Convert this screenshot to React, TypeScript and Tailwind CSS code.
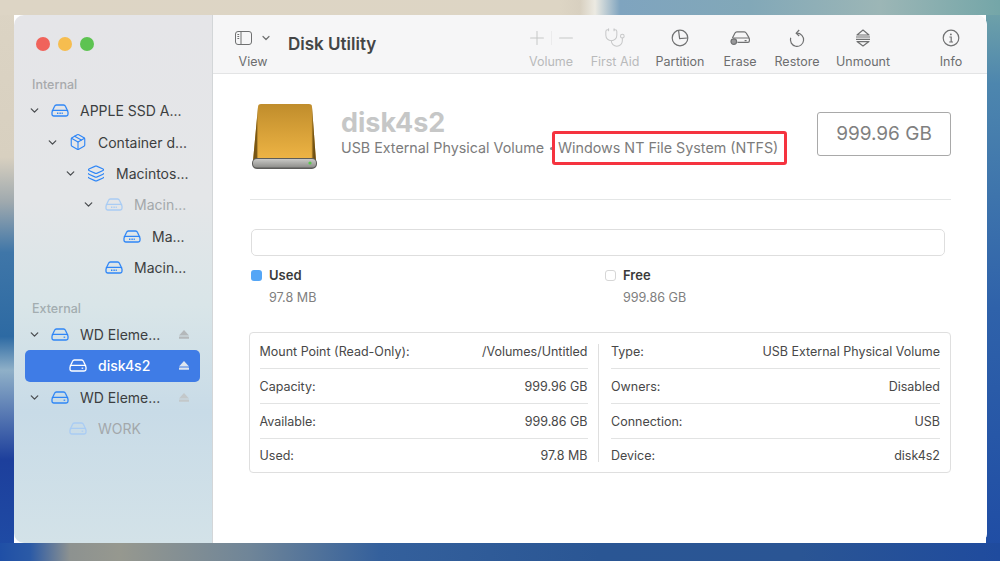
import { ChevronDown, Layers, Plus, Minus, Stethoscope, Package } from "lucide-react";

const font = "font-['Inter','Liberation_Sans',sans-serif]";

const DriveIcon = ({ className = "text-[#2f86f6]" }: { className?: string }) => (
  <svg width="18" height="13" viewBox="0 0 18 13" fill="none" stroke="currentColor" strokeWidth="1.3" className={className}>
    <path d="M1.2 7.2 3.6 2.2C4 1.3 4.6 1 5.4 1h7.2c.8 0 1.4.3 1.8 1.2l2.4 5" />
    <rect x="1" y="6.4" width="16" height="5.6" rx="1.8" />
    <path d="M12.6 9.2h1.6" strokeWidth="1.2" />
  </svg>
);

const SsdIcon = ({ className = "text-[#2f86f6]" }: { className?: string }) => (
  <svg width="18" height="13" viewBox="0 0 18 13" fill="none" stroke="currentColor" strokeWidth="1.3" className={className}>
    <path d="M1.2 7.2 3.6 2.2C4 1.3 4.6 1 5.4 1h7.2c.8 0 1.4.3 1.8 1.2l2.4 5" />
    <rect x="1" y="6.4" width="16" height="5.6" rx="1.8" />
    <path d="M6 9.2h6" strokeWidth="1.6" strokeDasharray="1 .6" />
  </svg>
);

const Eject = ({ className }: { className: string }) => (
  <svg width="10" height="9" viewBox="0 0 10 9" fill="currentColor" className={className}>
    <path d="M5 0 10 5.4H0Z" />
    <rect x="0" y="6.6" width="10" height="2.2" rx=".4" />
  </svg>
);

type Row = {
  label: string;
  pl: string;
  chevron?: boolean;
  icon: "ssd" | "drive" | "box" | "layers";
  dim?: boolean;
  eject?: string;
  selected?: boolean;
};

const internal: Row[] = [
  { label: "APPLE SSD A...", pl: "pl-[3px]", chevron: true, icon: "ssd" },
  { label: "Container d...", pl: "pl-[21px]", chevron: true, icon: "box" },
  { label: "Macintos...", pl: "pl-[39px]", chevron: true, icon: "layers" },
  { label: "Macin...", pl: "pl-[57px]", chevron: true, icon: "ssd", dim: true },
  { label: "Ma...", pl: "pl-[75px]", icon: "ssd" },
  { label: "Macin...", pl: "pl-[57px]", icon: "ssd" },
];

const external: Row[] = [
  { label: "WD Eleme...", pl: "pl-[3px]", chevron: true, icon: "drive", eject: "text-[#b4b8ba]" },
  { label: "disk4s2", pl: "pl-[21px]", icon: "drive", selected: true, eject: "text-[#dfe6ef]" },
  { label: "WD Eleme...", pl: "pl-[3px]", chevron: true, icon: "drive", eject: "text-[#c3c8ca]" },
  { label: "WORK", pl: "pl-[21px]", icon: "drive", dim: true },
];

const SidebarRow = ({ row }: { row: Row }) => {
  const tint = row.selected ? "text-white" : row.dim ? "text-[#a9ccf4]" : "text-[#2f86f6]";
  return (
    <div
      className={`flex h-[31.4px] items-center rounded-[5px] pr-[11px] ${row.pl} ${
        row.selected ? "bg-[#3f7ce6]" : ""
      }`}
    >
      <div className="w-[12px] shrink-0 text-[#4a4d50]">
        {row.chevron && <ChevronDown size={13} strokeWidth={2.4} />}
      </div>
      <div className="ml-[11px] flex w-[18px] shrink-0 justify-center">
        {row.icon === "ssd" && <SsdIcon className={tint} />}
        {row.icon === "drive" && <DriveIcon className={tint} />}
        {row.icon === "box" && <Package size={18} strokeWidth={1.5} className={tint} />}
        {row.icon === "layers" && <Layers size={19} strokeWidth={1.5} className={tint} />}
      </div>
      <span
        className={`ml-[11px] flex-1 whitespace-nowrap text-[14px] ${
          row.selected ? "font-medium text-white" : row.dim ? "text-[#a3a8ab]" : "text-[#3c3e40]"
        }`}
      >
        {row.label}
      </span>
      {row.eject && <Eject className={row.eject} />}
    </div>
  );
};

const Sidebar = () => (
  <aside className="flex w-[199px] shrink-0 flex-col border-r border-[#d3d6d8] bg-[linear-gradient(180deg,#e5e5e8_0%,#e4e6e8_35%,#d9e5e8_55%,#c8dbe7_75%,#d3e2e8_100%)] pl-[11px] pr-[12px]">
    <div className="flex gap-[8px] pl-[11px] pt-[22px]">
      <div className="h-[14px] w-[14px] rounded-full bg-[#f0635b]" />
      <div className="h-[14px] w-[14px] rounded-full bg-[#f6bd4f]" />
      <div className="h-[14px] w-[14px] rounded-full bg-[#5dc351]" />
    </div>
    <div className="mt-[26px] pl-[7px] text-[12.5px] font-medium leading-[16px] text-[#a8aaac]">Internal</div>
    <div className="mt-[2px] flex flex-col">
      {internal.map((row, i) => (
        <SidebarRow key={i} row={row} />
      ))}
    </div>
    <div className="mt-[18px] pl-[7px] text-[12.5px] font-medium leading-[16px] text-[#a3adb0]">External</div>
    <div className="mt-[1.5px] flex flex-col">
      {external.map((row, i) => (
        <SidebarRow key={i} row={row} />
      ))}
    </div>
  </aside>
);

const PieIcon = () => (
  <svg width="18" height="18" viewBox="0 0 18 18" fill="none" stroke="currentColor" strokeWidth="1.2">
    <circle cx="9" cy="9" r="7.8" />
    <path d="M7.6 1.6 8.6 9.6 16.6 9" />
  </svg>
);

const EraseIcon = () => (
  <svg width="21" height="16" viewBox="0 0 21 16" fill="none" stroke="currentColor" strokeWidth="1.2">
    <path d="M2.4 8 5 3c.4-.8 1-1.2 1.9-1.2h7.4c.9 0 1.5.4 1.9 1.2l2.6 4.4c.5.8.6 1.3.6 2.2v1.2c0 1-.6 1.6-1.6 1.6H7.4" />
    <path d="M3 8h16M14.6 10.6h2" />
    <circle cx="3.8" cy="11.6" r="2.8" fill="currentColor" fillOpacity=".7" />
  </svg>
);

const RestoreIcon = () => (
  <svg width="18" height="19" viewBox="0 0 18 19" fill="none" stroke="currentColor" strokeWidth="1.2">
    <path d="M9 4.2a6.6 6.6 0 1 1-6.3 4.6" />
    <path d="M11.2 1 8.2 4.2l3 2.8" />
  </svg>
);

const UnmountIcon = () => (
  <svg width="16" height="18" viewBox="0 0 16 18" fill="none" stroke="currentColor" strokeWidth="1.2" strokeLinejoin="round">
    <path d="M8 1 14 6H2Z" />
    <path d="M1 8h14M1 10.4h14" />
    <path d="M8 17 14 12.6H2Z" />
  </svg>
);

const InfoIcon = () => (
  <svg width="18" height="18" viewBox="0 0 18 18" fill="none" stroke="currentColor" strokeWidth="1.2">
    <circle cx="9" cy="9" r="7.8" />
    <path d="M7.4 8h1.8v5M7.2 13h3.8" />
    <circle cx="8.9" cy="5.4" r=".9" fill="currentColor" stroke="none" />
  </svg>
);

const SidebarToggleIcon = () => (
  <svg width="17" height="14" viewBox="0 0 17 14" fill="none" stroke="currentColor" strokeWidth="1">
    <rect x=".5" y=".5" width="16" height="13" rx="2.5" />
    <path d="M6 .5v13M2.4 3.5h1.8M2.4 5.5h1.8M2.4 7.5h1.8" />
  </svg>
);

const ToolItem = ({
  label,
  width,
  dim,
  children,
}: {
  label: string;
  width: string;
  dim?: boolean;
  children: React.ReactNode;
}) => (
  <div className={`flex flex-col items-center ${width}`}>
    <div className={`flex h-[20px] items-center ${dim ? "text-[#c6c7c8]" : "text-[#707172]"}`}>{children}</div>
    <div className={`mt-[6px] whitespace-nowrap text-[12.5px] leading-[16px] ${dim ? "text-[#b9babb]" : "text-[#6d6e6f]"}`}>
      {label}
    </div>
  </div>
);

const Toolbar = () => (
  <header className="flex h-[59px] shrink-0 items-start border-b border-[#e3e4e5] bg-[#f6f6f7] pl-[24px] pr-[22px] pt-[13px]">
    <div className="flex w-[32px] flex-col items-center text-[#6f7071]">
      <div className="flex h-[20px] items-center gap-[8px]">
        <SidebarToggleIcon />
        <ChevronDown size={12} strokeWidth={2.4} />
      </div>
      <div className="mt-[6px] text-[12.5px] leading-[16px] text-[#6d6e6f]">View</div>
    </div>
    <div className="ml-[19px] mt-[4px] text-[17px] font-semibold leading-[24px] text-[#444546]">Disk Utility</div>
    <div className="ml-auto flex">
      <ToolItem label="Volume" width="w-[60px]" dim>
        <Plus size={22} strokeWidth={1.1} />
        <div className="mx-[3px] h-[14px] w-px bg-[#ebebec]" />
        <Minus size={22} strokeWidth={1.1} />
      </ToolItem>
      <ToolItem label="First Aid" width="w-[68px]" dim>
        <Stethoscope size={22} strokeWidth={1.1} />
      </ToolItem>
      <ToolItem label="Partition" width="w-[62px]">
        <PieIcon />
      </ToolItem>
      <ToolItem label="Erase" width="w-[58px]">
        <EraseIcon />
      </ToolItem>
      <ToolItem label="Restore" width="w-[56px]">
        <RestoreIcon />
      </ToolItem>
      <ToolItem label="Unmount" width="w-[76px]">
        <UnmountIcon />
      </ToolItem>
      <ToolItem label="Info" width="w-[28px] ml-[36px]">
        <InfoIcon />
      </ToolItem>
    </div>
  </header>
);

const DiskArt = () => (
  <svg width="68" height="68" viewBox="0 0 68 68" className="shrink-0">
    <defs>
      <linearGradient id="gold" x1="0" y1="0" x2="0" y2="1">
        <stop offset="0" stopColor="#c08d2c" />
        <stop offset="1" stopColor="#efb545" />
      </linearGradient>
      <linearGradient id="edge" x1="0" y1="0" x2="1" y2="0">
        <stop offset="0" stopColor="#6f4f12" />
        <stop offset=".06" stopColor="#7d5a16" />
        <stop offset=".09" stopColor="#d9a63e" stopOpacity="0" />
        <stop offset=".92" stopColor="#d9a63e" stopOpacity="0" />
        <stop offset=".95" stopColor="#7d5a16" />
        <stop offset="1" stopColor="#5f4410" />
      </linearGradient>
      <linearGradient id="base" x1="0" y1="0" x2="0" y2="1">
        <stop offset="0" stopColor="#c9c9c6" />
        <stop offset="1" stopColor="#8e8e8b" />
      </linearGradient>
    </defs>
    <path d="M7 4c0-2 1-3 3-3h48c2 0 3 1 3 3l4 54H2Z" fill="url(#gold)" />
    <path d="M7 4c0-2 1-3 3-3h48c2 0 3 1 3 3l4 54H2Z" fill="url(#edge)" />
    <rect x="1" y="55" width="65" height="11" rx="5" fill="#5c5c5a" />
    <rect x="2" y="56" width="63" height="8.5" rx="4" fill="url(#base)" />
    <circle cx="59" cy="60" r="1.6" fill="#58c94e" />
  </svg>
);

const InfoColumn = ({ rows, width }: { rows: [string, string][]; width: string }) => (
  <div className={`flex flex-col ${width}`}>
    {rows.map(([label, value], i) => (
      <div
        key={label}
        className={`flex shrink-0 items-center justify-between pt-[2px] text-[12.5px] text-[#484848] ${
          i < rows.length - 1 ? "h-[35px] border-b-[1.5px] border-[#e2e3e3]" : "h-[32px]"
        }`}
      >
        <span>{label}</span>
        <span>{value}</span>
      </div>
    ))}
  </div>
);

const Details = () => (
  <main className="flex flex-1 flex-col bg-white pl-[37px] pr-[36px] pt-[29px]">
    <div className="flex items-start">
      <div className="ml-[1px] shrink-0">
        <DiskArt />
      </div>
      <div className="ml-[22px] pt-[6px]">
        <div className="text-[27px] font-bold leading-[28px] text-[#c6c7c7]">disk4s2</div>
        <div className="flex items-center whitespace-nowrap text-[14.3px] leading-[22px] text-[#7c7c7c]">
          <span>USB External Physical Volume</span>
          <span className="mx-[5.5px] h-[3px] w-[3px] rounded-full bg-[#8c8c8c]" />
          <span className="relative">
            Windows NT File System (NTFS)
            <span className="absolute -bottom-[6px] -left-[6px] -right-[9px] -top-[6px] rounded-[3px] border-[3.5px] border-[#f5333f]" />
          </span>
        </div>
      </div>
      <div className="ml-auto mt-[9px] flex h-[44px] w-[134px] items-center justify-center rounded-[3px] border border-[#a9a9a9] text-[19px] text-[#808080]">
        999.96 GB
      </div>
    </div>
    <div className="mt-[28px] h-px bg-[#e4e6e6]" />
    <div className="ml-[1px] mr-[6px] mt-[29px] h-[27px] rounded-[5px] border-[1.5px] border-[#dedede]" />
    <div className="ml-[1px] mt-[11px] flex">
      <div className="w-[354px]">
        <div className="flex items-center gap-[7px]">
          <div className="h-[11px] w-[11px] rounded-[3px] bg-[#55a6f6]" />
          <span className="text-[13px] font-semibold leading-[16px] text-[#3a3a3a]">Used</span>
        </div>
        <div className="ml-[18px] mt-[7px] text-[12.6px] leading-[16px] text-[#808080]">97.8 MB</div>
      </div>
      <div>
        <div className="flex items-center gap-[7px]">
          <div className="h-[11px] w-[11px] rounded-[3px] border border-[#d6d6d6]" />
          <span className="text-[13px] font-semibold leading-[16px] text-[#3a3a3a]">Free</span>
        </div>
        <div className="ml-[18px] mt-[7px] text-[12.6px] leading-[16px] text-[#808080]">999.86 GB</div>
      </div>
    </div>
    <div className="-ml-px mt-[26px] flex h-[141px] items-stretch rounded-[4px] border-[1.5px] border-[#dfdfdf] pl-[9.5px] pr-[10px] pt-[1px]">
      <InfoColumn
        width="w-[328px]"
        rows={[
          ["Mount Point (Read-Only):", "/Volumes/Untitled"],
          ["Capacity:", "999.96 GB"],
          ["Available:", "999.86 GB"],
          ["Used:", "97.8 MB"],
        ]}
      />
      <div className="mx-[10px] my-[10px] w-[1.5px] shrink-0 bg-[#dfdfdf]" />
      <InfoColumn
        width="flex-1 pl-[2px]"
        rows={[
          ["Type:", "USB External Physical Volume"],
          ["Owners:", "Disabled"],
          ["Connection:", "USB"],
          ["Device:", "disk4s2"],
        ]}
      />
    </div>
  </main>
);

export default function App() {
  return (
    <div
      className={`${font} h-[561px] w-[1000px] overflow-hidden pb-[18px] pl-[14px] pr-[13px] pt-[15px] [background:linear-gradient(90deg,#ddd5c5_0%,#ddd5c4_56%,#d8d0c0_58%,#eceae2_59.5%,#7fa4bf_62%,#82a8b8_75%,#9cb6b6_88%,#74a6a8_100%)_0_0/100%_15px_no-repeat,linear-gradient(90deg,#1f4fa6_0%,#2b5aa6_3%,#8d9290_7%,#96988f_12%,#6f8598_25%,#34609c_38%,#2a5694_60%,#2a5594_80%,#1f4b9e_100%)_0_100%/100%_18px_no-repeat,linear-gradient(180deg,#dcd4c4_0%,#d8d0c0_28%,#9fa9ae_36%,#3f76a8_45%,#2d6aa3_60%,#8fb0c8_66%,#1d3f9c_82%,#1f4da6_100%)_0_0/14px_100%_no-repeat,linear-gradient(180deg,#74a6a8_0%,#4d86ae_15%,#2f62aa_55%,#1f4ca4_100%)_100%_0/14px_100%_no-repeat]`}
    >
      <div className="flex h-[528px] overflow-hidden rounded-[10px] bg-white">
        <Sidebar />
        <div className="flex min-w-0 flex-1 flex-col">
          <Toolbar />
          <Details />
        </div>
      </div>
    </div>
  );
}
